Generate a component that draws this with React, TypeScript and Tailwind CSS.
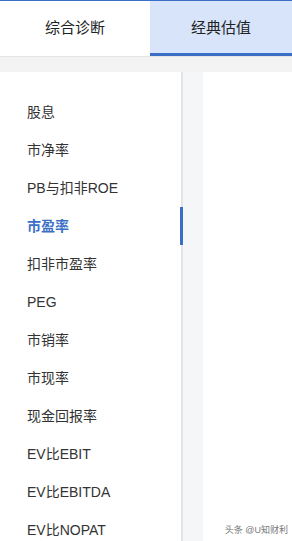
import React from "react";

const items = [
  "股息",
  "市净率",
  "PB与扣非ROE",
  "市盈率",
  "扣非市盈率",
  "PEG",
  "市销率",
  "市现率",
  "现金回报率",
  "EV比EBIT",
  "EV比EBITDA",
  "EV比NOPAT",
];

export default function App() {
  const active = 3;
  return (
    <div
      className="w-[292px] h-[541px] overflow-hidden bg-white flex flex-col"
      style={{ fontFamily: '"Liberation Sans", "Noto Sans CJK SC", sans-serif' }}
    >
      <div className="h-px bg-[#3b6fc6] shrink-0" />
      <div className="flex h-[55px] shrink-0">
        <div className="w-[150px] flex items-center justify-center text-[15px] text-[#222] bg-white">
          综合诊断
        </div>
        <div className="flex-1 flex items-center justify-center text-[15px] text-[#222] bg-[#d7e4fa] border-b-[3px] border-[#3b6fc6] pt-[2px]">
          经典估值
        </div>
      </div>
      <div className="h-[16px] shrink-0 bg-[#f3f3f3] border-t border-[#e4e4e4]" />
      <div className="flex flex-1 min-h-0">
        <div className="w-[183px] shrink-0 bg-white border-r-[2px] border-[#e4e4e4] pt-[21px] relative">
          {items.map((t, i) => (
            <div
              key={t}
              className={
                "h-[38px] flex items-center pl-[27px] text-[14px] relative " +
                (i === active ? "text-[#3b6fc6] font-bold" : "text-[#333]")
              }
            >
              {t}
              {i === active && (
                <div className="absolute right-[-2px] top-0 bottom-0 w-[3px] bg-[#3b6fc6]" />
              )}
            </div>
          ))}
        </div>
        <div className="w-[20px] shrink-0 bg-[#f5f6f8]" />
        <div className="flex-1 bg-white flex flex-col justify-end items-end pr-[4px] pb-[4px]">
          <span className="text-[9px] text-[#777]">头条 @U知财利</span>
        </div>
      </div>
    </div>
  );
}
